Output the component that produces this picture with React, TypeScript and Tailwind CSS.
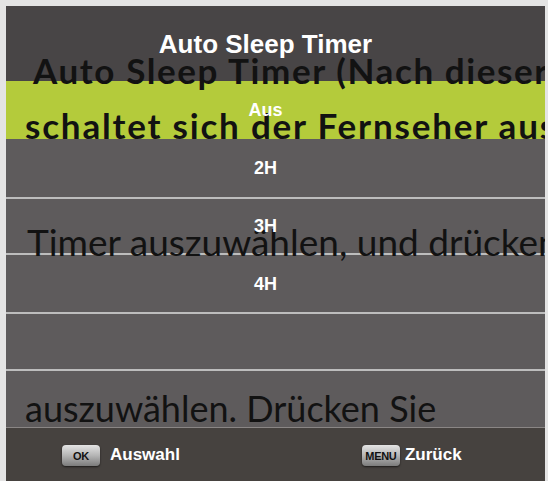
import React from 'react';

const rows = [
  { label: 'Aus', h: 'h-[58px]', bg: 'bg-[#b4cb3b]' },
  { label: '2H', h: 'h-[58px]', bg: 'bg-[#5e5b5c]' },
  { label: '3H', h: 'h-[54px]', bg: 'bg-[#5e5b5c]' },
  { label: '4H', h: 'h-[57px]', bg: 'bg-[#5e5b5c]' },
  { label: '', h: 'h-[55px]', bg: 'bg-[#5e5b5c]' },
  { label: '', h: 'h-[56px]', bg: 'bg-[#5e5b5c]' },
];

function KeyCap({ text }: { text: string }) {
  return (
    <span className="inline-flex items-center justify-center w-[38px] h-[21px] rounded-[4px] bg-gradient-to-b from-[#e4e4e4] via-[#b5b5b5] to-[#7c7c7c] shadow-[0_1px_2px_rgba(0,0,0,0.6)] text-[#111] font-bold text-[11px] tracking-tight">
      {text}
    </span>
  );
}

export default function App() {
  return (
    <div className="w-[548px] h-[481px] bg-[#e4e4e4] pt-[6px] pl-[6px] overflow-hidden" style={{ fontFamily: '"Liberation Sans", Arial, sans-serif' }}>
      <div className="relative w-[539px] h-[475px] overflow-hidden flex flex-col">
        {/* TV menu */}
        <div className="h-[75px] bg-[#484546] flex items-center justify-center pr-[20px]">
          <span className="relative z-20 text-white font-bold text-[26px] leading-none">Auto Sleep Timer</span>
        </div>
        {rows.map((r, i) => (
          <React.Fragment key={i}>
            {i > 1 && <div className="h-[2px] bg-[#bdbdbd]" />}
            <div className={`${r.h} ${r.bg} flex items-center justify-center pr-[20px]`}>
              {r.label && (
                <span className="relative z-20 text-white font-bold text-[18px] leading-none">{r.label}</span>
              )}
            </div>
          </React.Fragment>
        ))}
        <div className="flex-1 bg-[#46423f] border-t border-[#8a8685] flex items-center">
          <div className="ml-[56px]"><KeyCap text="OK" /></div>
          <span className="ml-[10px] text-white font-bold text-[17px]">Auswahl</span>
          <div className="ml-[182px]"><KeyCap text="MENU" /></div>
          <span className="ml-[5px] text-white font-bold text-[17px]">Zurück</span>
        </div>

        {/* manual text showing through */}
        <div className="absolute inset-0 z-10 pointer-events-none text-[#121212] whitespace-nowrap" style={{ fontFamily: 'Lato, "Open Sans", sans-serif' }}>
          <div className="absolute left-[27px] top-[47px] font-bold text-[35px] tracking-[1.6px] leading-none">Auto Sleep Timer (Nach dieser</div>
          <div className="absolute left-[19px] top-[102px] font-bold text-[35px] tracking-[1.8px] leading-none">schaltet sich der Fernseher aus</div>
          <div className="absolute left-[21px] top-[217px] text-[37px] leading-none">Timer auszuwählen, und drücken</div>
          <div className="absolute left-[19px] top-[384px] text-[36px] leading-none">auszuwählen. Drücken Sie</div>
        </div>
      </div>
    </div>
  );
}
